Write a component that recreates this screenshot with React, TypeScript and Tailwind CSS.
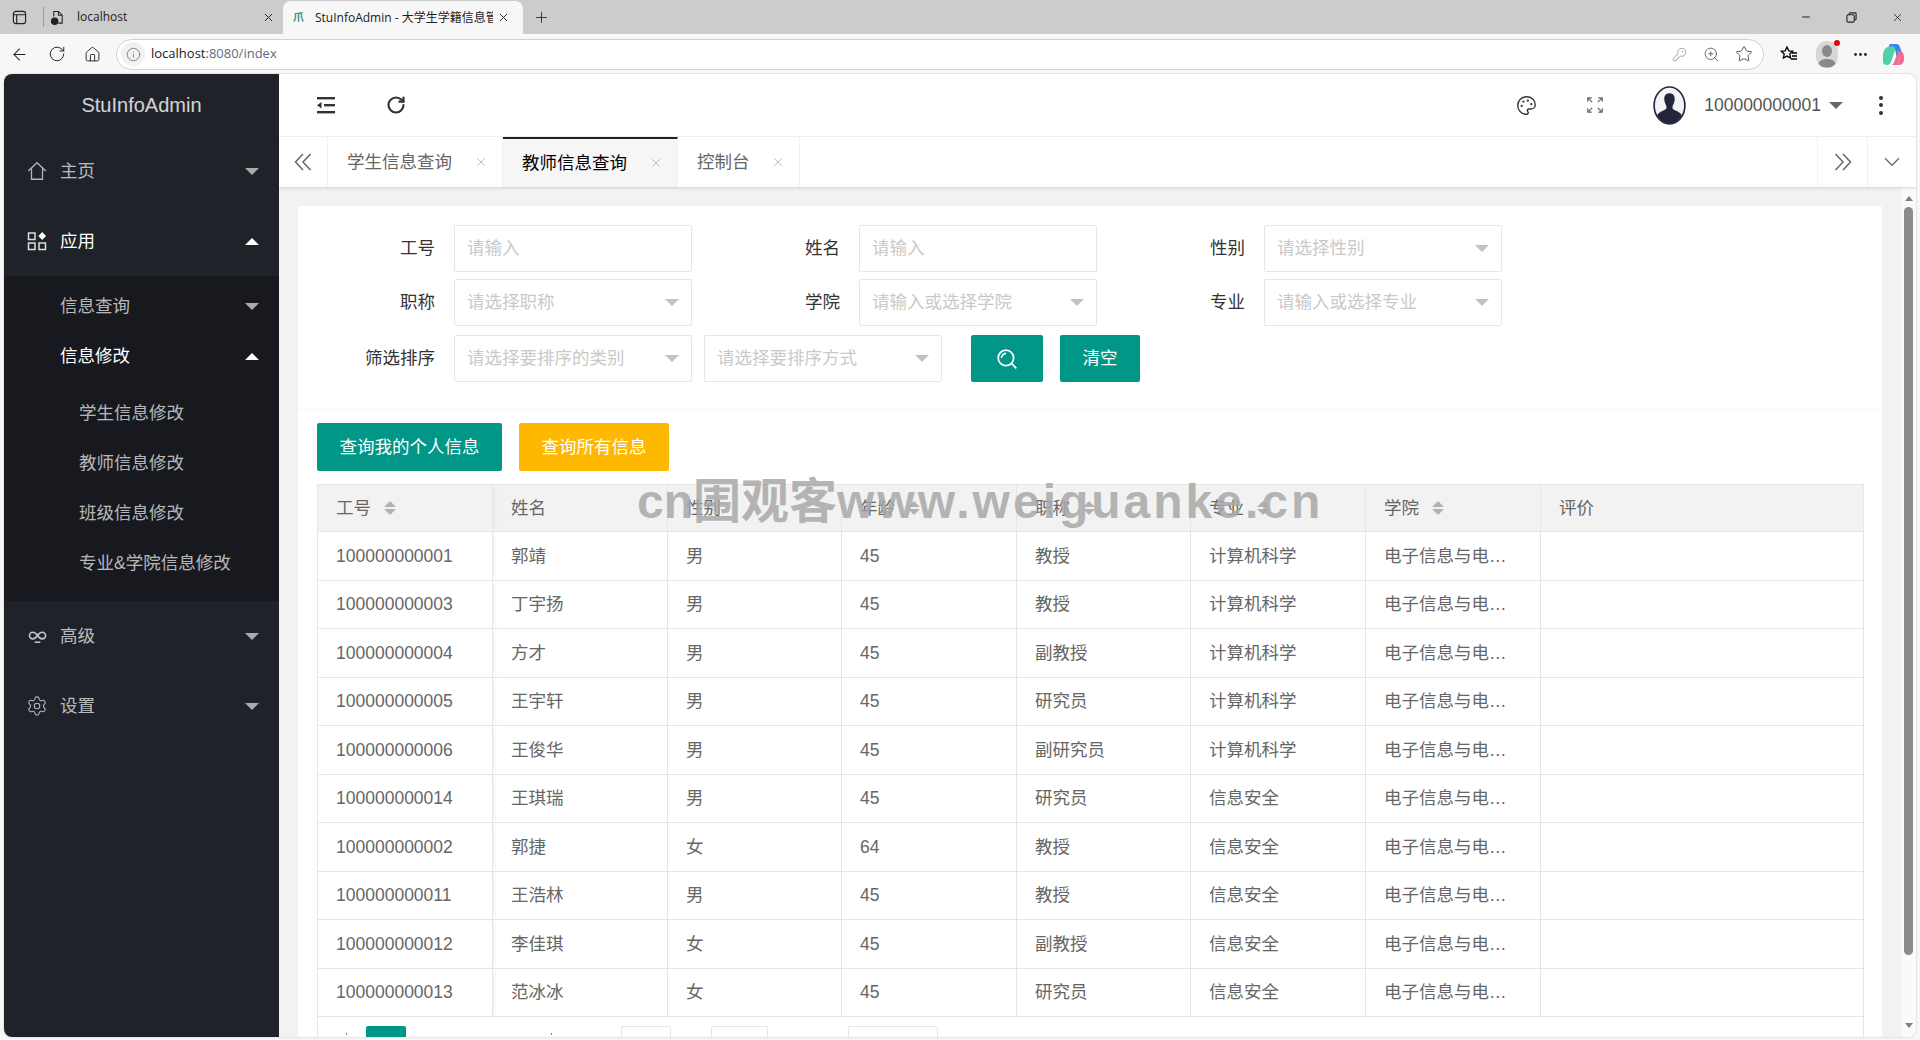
import React from 'react';
import { ChevronDown, Palette, RotateCw, Settings, X, Plus, ArrowLeft, Home, Info, KeyRound, ZoomIn, Star, MoreHorizontal, Minus } from 'lucide-react';

const rows = [
    ['100000000001', '郭靖', '男', '45', '教授', '计算机科学'],
    ['100000000003', '丁宇扬', '男', '45', '教授', '计算机科学'],
    ['100000000004', '方才', '男', '45', '副教授', '计算机科学'],
    ['100000000005', '王宇轩', '男', '45', '研究员', '计算机科学'],
    ['100000000006', '王俊华', '男', '45', '副研究员', '计算机科学'],
    ['100000000014', '王琪瑞', '男', '45', '研究员', '信息安全'],
    ['100000000002', '郭捷', '女', '64', '教授', '信息安全'],
    ['100000000011', '王浩林', '男', '45', '教授', '信息安全'],
    ['100000000012', '李佳琪', '女', '45', '副教授', '信息安全'],
    ['100000000013', '范冰冰', '女', '45', '研究员', '信息安全'],
];

function CaretDown({ color = 'border-t-[#aaaaaa]' }: { color?: string }) {
    return <span className={`block w-0 h-0 border-x-[7px] border-x-transparent border-t-[7px] ${color}`} />;
}

function CaretUp() {
    return <span className="block w-0 h-0 border-x-[7px] border-x-transparent border-b-[7px] border-b-white" />;
}

function SortIcon() {
    return (
        <span className="inline-flex flex-col gap-[2px] ml-[13px]">
            <span className="block w-0 h-0 border-x-[6px] border-x-transparent border-b-[6px] border-b-[#b2b2b2]" />
            <span className="block w-0 h-0 border-x-[6px] border-x-transparent border-t-[6px] border-t-[#b2b2b2]" />
        </span>
    );
}

function SideItem({ icon, label, open }: { icon: React.ReactNode; label: string; open?: boolean }) {
    return (
        <div className={`h-[70px] flex items-center pl-[21px] pr-[20px] text-[17.5px] ${open ? 'text-white' : 'text-white/70'}`}>
            <span className="w-[24px] h-[24px] flex items-center justify-center mr-[11px]">{icon}</span>
            <span className="flex-1">{label}</span>
            {open ? <CaretUp /> : <CaretDown />}
        </div>
    );
}

function SubItem({ label, open }: { label: string; open?: boolean }) {
    return (
        <div className={`h-[50px] flex items-center pl-[56px] pr-[20px] text-[17.5px] ${open ? 'text-white' : 'text-white/70'}`}>
            <span className="flex-1">{label}</span>
            {open ? <CaretUp /> : <CaretDown />}
        </div>
    );
}

function Sidebar() {
    return (
        <div className="w-[275px] shrink-0 bg-[#20222a] flex flex-col">
            <div className="h-[62px] flex items-center justify-center text-[20px] text-white/80 border-b border-[#1c1e25]">StuInfoAdmin</div>
            <SideItem
                label="主页"
                icon={<svg viewBox="0 0 20 20" className="w-[22px] h-[22px] fill-none stroke-[#b4b5b8] stroke-[1.2]"><path d="M2 10 10 2.500 18 10M5 8v9.500h10V8" /></svg>}
            />
            <SideItem
                open
                label="应用"
                icon={<svg viewBox="0 0 20 20" className="w-[20px] h-[20px] fill-none stroke-[#dddddd] stroke-[1.5]"><rect x="1.500" y="2" width="6.500" height="6.500" /><rect x="1.500" y="12" width="6.500" height="6.500" /><rect x="12" y="12" width="6.500" height="6.500" /><path d="M15.200 1 19 5l-3.800 4-3.800-4z" className="fill-white stroke-none" /></svg>}
            />
            <div className="bg-[#18191e] pt-[5px] pb-[13px]">
                <SubItem label="信息查询" />
                <SubItem label="信息修改" open />
                <div className="pt-[7px] text-[17.5px] text-white/70">
                    {['学生信息修改', '教师信息修改', '班级信息修改', '专业&学院信息修改'].map(label => (
                        <div key={label} className="h-[50px] flex items-center pl-[75px]">{label}</div>
                    ))}
                </div>
            </div>
            <SideItem
                label="高级"
                icon={<svg viewBox="0 0 20 20" className="w-[19px] h-[19px] fill-none stroke-[#c4c5c8] stroke-[1.7]"><path d="M10 9C8 6 6.500 5.500 5 5.500a3.500 3.500 0 0 0 0 7c1.500 0 3-.5 5-3.500s3.500-3.500 5-3.500a3.500 3.500 0 0 1 0 7c-1.500 0-3-.5-5-3.500zM7 16h6" /></svg>}
            />
            <SideItem label="设置" icon={<Settings className="w-[22px] h-[22px] text-[#b4b5b8]" strokeWidth={1.2} />} />
        </div>
    );
}

function Header() {
    return (
        <div className="h-[63px] shrink-0 flex items-center border-b border-[#f4f4f4]">
            <svg viewBox="0 0 20 20" className="ml-[37px] w-[20px] h-[20px] fill-[#333]">
                <rect x="1" y="2" width="18" height="2.400" />
                <rect x="8" y="9" width="11" height="2.400" />
                <rect x="1" y="16" width="18" height="2.400" />
                <path d="M1 10.200 5.500 7v6.400z" />
            </svg>
            <RotateCw className="ml-[50px] w-[20px] h-[20px] text-[#333]" strokeWidth={2.6} />
            <span className="flex-1" />
            <Palette className="w-[21px] h-[21px] text-[#333]" strokeWidth={1.6} />
            <svg viewBox="0 0 20 20" className="ml-[50px] w-[16px] h-[16px] fill-none stroke-[#666] stroke-[1.5]">
                <path d="M1 6V1h5M1 1l5.500 5.500M14 1h5v5M19 1l-5.500 5.500M1 14v5h5M1 19l5.500-5.500M14 19h5v-5M19 19l-5.500-5.500" />
            </svg>
            <svg viewBox="0 0 32 38" className="ml-[50px] w-[33px] h-[39px]">
                <ellipse cx="16" cy="19" rx="15" ry="18" fill="#f3f3f5" stroke="#23253a" strokeWidth="1.600" />
                <path d="M16 7c-4 0-5.500 3-5 7 .3 2 1 4 2 5.500v2.500c-1 2-7 2.500-9 6.500 2 4 7 8 12 8s10-4 12-8c-2-4-8-4.500-9-6.500v-2.500c1-1.500 1.700-3.500 2-5.500.5-4-1-7-5-7z" fill="#23253a" />
            </svg>
            <span className="ml-[18px] text-[17.5px] text-[#555]">100000000001</span>
            <span className="ml-[8px]"><CaretDown color="border-t-[#666]" /></span>
            <span className="ml-[36px] mr-[33px] flex flex-col gap-[3.500px]">
                <span className="w-[4px] h-[4px] rounded-full bg-[#333]" />
                <span className="w-[4px] h-[4px] rounded-full bg-[#333]" />
                <span className="w-[4px] h-[4px] rounded-full bg-[#333]" />
            </span>
        </div>
    );
}

function TabItem({ label, width, active }: { label: string; width: string; active?: boolean }) {
    return (
        <div className={`${width} h-full flex items-center pl-[19px] border-r border-[#f2f2f2] text-[17.5px] ${active ? 'bg-[#f6f6f6] border-t-[2px] border-t-[#20222a] text-black' : 'text-[#666]'}`}>
            <span className="flex-1">{label}</span>
            <X className="w-[14px] h-[14px] mr-[14px] text-[#b4b4b4]" strokeWidth={1.5} />
        </div>
    );
}

function DoubleChevron({ flip }: { flip?: boolean }) {
    return (
        <svg viewBox="0 0 20 20" className={`w-[20px] h-[20px] fill-none stroke-[#666] stroke-[1.5] ${flip ? 'rotate-180' : ''}`}>
            <path d="M10 2 2.500 10 10 18M17.500 2 10 10l7.500 8" />
        </svg>
    );
}

function TabsBar() {
    return (
        <div className="relative h-[50px] shrink-0 flex items-center shadow-[0_1px_3px_rgba(0,0,0,0.15)] bg-white">
            <div className="w-[49px] h-full flex items-center justify-center border-r border-[#f2f2f2]">
                <DoubleChevron />
            </div>
            <TabItem label="学生信息查询" width="w-[175px]" />
            <TabItem label="教师信息查询" width="w-[175px]" active />
            <TabItem label="控制台" width="w-[122px]" />
            <span className="flex-1" />
            <div className="w-[50px] h-full flex items-center justify-center border-l border-[#f2f2f2]">
                <DoubleChevron flip />
            </div>
            <div className="w-[49px] h-full flex items-center justify-center border-l border-[#f2f2f2]">
                <ChevronDown className="w-[26px] h-[26px] text-[#666]" strokeWidth={1.200} />
            </div>
        </div>
    );
}

function Field({ label, placeholder, select }: { label: string; placeholder: string; select?: boolean }) {
    return (
        <div className="flex items-center">
            <label className="w-[137px] text-right text-[17.5px] text-[#333]">{label}</label>
            <Control placeholder={placeholder} select={select} className="ml-[19px]" />
        </div>
    );
}

function Control({ placeholder, select, className = '' }: { placeholder: string; select?: boolean; className?: string }) {
    return (
        <div className={`w-[238px] h-[47px] px-[12px] flex items-center border border-[#e6e6e6] rounded-[2px] text-[17.5px] text-[#c9c9c9] ${className}`}>
            <span className="flex-1">{placeholder}</span>
            {select && <CaretDown color="border-t-[#c2c2c2]" />}
        </div>
    );
}

function SearchForm() {
    return (
        <div className="h-[204px] pt-[19px] border-b border-[#f6f6f6] flex flex-col">
            <div className="flex gap-x-[11px]">
                <Field label="工号" placeholder="请输入" />
                <Field label="姓名" placeholder="请输入" />
                <Field label="性别" placeholder="请选择性别" select />
            </div>
            <div className="flex gap-x-[11px] mt-[7px]">
                <Field label="职称" placeholder="请选择职称" select />
                <Field label="学院" placeholder="请输入或选择学院" select />
                <Field label="专业" placeholder="请输入或选择专业" select />
            </div>
            <div className="flex items-center mt-[9px]">
                <Field label="筛选排序" placeholder="请选择要排序的类别" select />
                <Control placeholder="请选择要排序方式" select className="ml-[12px]" />
                <button className="ml-[29px] w-[72px] h-[47px] rounded-[2px] bg-[#009688] flex items-center justify-center">
                    <svg viewBox="0 0 20 20" className="w-[22px] h-[22px] fill-none stroke-white stroke-[1.600]"><circle cx="9" cy="9" r="7" /><path d="M14 14l4.500 4.500M5 9a4 4 0 0 1 4-4" /></svg>
                </button>
                <button className="ml-[17px] w-[80px] h-[47px] rounded-[2px] bg-[#009688] text-white text-[17.5px]">清空</button>
            </div>
        </div>
    );
}

function TeacherTable() {
    const headers = ['工号', '姓名', '性别', '年龄', '职称', '专业', '学院', '评价'];
    const sortable = [true, false, false, true, true, true, true, false];
    return (
        <table className="w-[1547px] table-fixed border-collapse text-[17.5px] text-[#666]">
            <colgroup>
                <col className="w-[175px]" />
                <col className="w-[175px]" />
                <col className="w-[174px]" />
                <col className="w-[175px]" />
                <col className="w-[174px]" />
                <col className="w-[175px]" />
                <col className="w-[175px]" />
                <col />
            </colgroup>
            <thead>
                <tr className="h-[47px] bg-[#f2f2f2]">
                    {headers.map((h, i) => (
                        <th key={h} className={`border border-[#e6e6e6] px-[18px] text-left font-normal ${i === 0 ? 'shadow-[4px_0_5px_-3px_rgba(0,0,0,0.08)]' : ''}`}>
                            <span className="flex items-center">{h}{sortable[i] && <SortIcon />}</span>
                        </th>
                    ))}
                </tr>
            </thead>
            <tbody>
                {rows.map(r => (
                    <tr key={r[0]} className="h-[48.5px]">
                        {r.map((c, i) => (
                            <td key={i} className={`border border-[#e6e6e6] px-[18px] ${i === 0 ? 'shadow-[4px_0_5px_-3px_rgba(0,0,0,0.08)]' : ''}`}>{c}</td>
                        ))}
                        <td className="border border-[#e6e6e6] px-[18px] truncate">电子信息与电气工程学院</td>
                        <td className="border border-[#e6e6e6]" />
                    </tr>
                ))}
            </tbody>
        </table>
    );
}

function Pager() {
    return (
        <div className="w-[1547px] h-[50px] border-x border-[#e6e6e6] pt-[9px] flex items-start text-[17.5px] text-[#666]">
            <span className="ml-[28px] w-[1px] h-[2px] mt-[7px] bg-[#888]" />
            <span className="ml-[19px] w-[40px] h-[36px] rounded-[2px] bg-[#009688]" />
            <span className="ml-[145px] w-[1px] h-[2px] mt-[7px] bg-[#888]" />
            <span className="ml-[69px] w-[50px] h-[36px] border border-[#e6e6e6] rounded-[2px]" />
            <span className="ml-[40px] w-[57px] h-[36px] border border-[#e6e6e6] rounded-[2px]" />
            <span className="ml-[80px] w-[90px] h-[36px] border border-[#e6e6e6] rounded-[2px]" />
        </div>
    );
}

function ContentArea() {
    return (
        <div className="flex-1 min-h-0 flex overflow-hidden">
            <div className="flex-1 bg-[#f2f2f2] pt-[19px] pl-[19px] pr-[19px] overflow-hidden">
                <div className="bg-white rounded-[2px] h-[900px]">
                    <SearchForm />
                    <div className="px-[19px]">
                        <div className="flex gap-[17px] pt-[13px] pb-[13px]">
                            <button className="w-[185px] h-[48px] rounded-[2px] bg-[#009688] text-white text-[17.5px]">查询我的个人信息</button>
                            <button className="w-[150px] h-[48px] rounded-[2px] bg-[#ffb800] text-white text-[17.5px]">查询所有信息</button>
                        </div>
                        <TeacherTable />
                        <Pager />
                    </div>
                </div>
            </div>
            <div className="w-[15px] shrink-0 bg-[#fafafa] flex flex-col items-center pt-[9px] pb-[9px]">
                <span className="w-0 h-0 border-x-[4.500px] border-x-transparent border-b-[5px] border-b-[#808080]" />
                <span className="w-[9px] h-[748px] mt-[6px] rounded-full bg-[#8b8b8b]" />
                <span className="flex-1" />
                <span className="w-0 h-0 border-x-[4.500px] border-x-transparent border-t-[5px] border-t-[#808080]" />
            </div>
        </div>
    );
}

function BrowserTabs() {
    return (
        <div className="h-[34px] shrink-0 bg-[#cccccc] flex items-center text-[#222]">
            <svg viewBox="0 0 16 16" className="ml-[12px] w-[15px] h-[15px] fill-none stroke-[#222] stroke-[1.2]"><rect x="1.500" y="1.500" width="13" height="13" rx="2.500" /><path d="M1.500 5h13M5 5v9.500" /></svg>
            <span className="ml-[16px] w-[1px] h-[20px] bg-[#999]" />
            <svg viewBox="0 0 16 16" className="ml-[6px] w-[15px] h-[17px] fill-none stroke-[#222] stroke-[1.1]"><path d="M4 7V1.500h5l4 4V14H9M9 1.500v4h4" /><circle cx="5" cy="12" r="3.500" className="fill-[#222]" /></svg>
            <span className="ml-[12px] w-[185px] text-[12px] text-[#222] font-['Open_Sans','Noto_Sans_CJK_SC',sans-serif]">localhost</span>
            <X className="w-[13px] h-[13px]" strokeWidth={1.8} />
            <div className="ml-[8px] w-[240px] h-[33px] mt-[1px] bg-[#f7f7f7] rounded-t-[8px] flex items-center pl-[8px]">
                <span className="w-[15px] h-[15px] flex items-center justify-center text-[11px] leading-none font-bold text-[#3b8f86]">爪</span>
                <span className="ml-[9px] w-[178px] whitespace-nowrap overflow-hidden text-[12px] text-[#222] font-['Open_Sans','Noto_Sans_CJK_SC',sans-serif]">StuInfoAdmin - 大学生学籍信息管理系统</span>
                <X className="ml-[4px] w-[13px] h-[13px]" strokeWidth={1.8} />
            </div>
            <Plus className="ml-[10px] w-[17px] h-[17px]" strokeWidth={1.200} />
            <span className="flex-1" />
            <Minus className="w-[12px] h-[12px]" strokeWidth={2} />
            <svg viewBox="0 0 12 12" className="ml-[34px] w-[11px] h-[11px] fill-none stroke-[#222] stroke-[1.200]"><rect x="1" y="3" width="8" height="8" rx="1.500" /><path d="M3.500 3V2a1 1 0 0 1 1-1H10a1 1 0 0 1 1 1v5.500a1 1 0 0 1-1 1H9" /></svg>
            <X className="ml-[34px] mr-[16px] w-[13px] h-[13px]" strokeWidth={1.5} />
        </div>
    );
}

function BrowserToolbar() {
    return (
        <div className="h-[40px] shrink-0 bg-[#f7f7f7] flex items-center text-[#222]">
            <ArrowLeft className="ml-[10px] w-[19px] h-[19px]" strokeWidth={1.3} />
            <RotateCw className="ml-[19px] w-[18px] h-[18px]" strokeWidth={1.3} />
            <Home className="ml-[18px] w-[17px] h-[17px]" strokeWidth={1.3} />
            <div className="ml-[15px] w-[1648px] h-[31px] bg-white border border-[#d0d0d0] rounded-full flex items-center">
                <span className="ml-[4px] w-[24px] h-[24px] rounded-full bg-[#f1f1f1] flex items-center justify-center">
                    <Info className="w-[15px] h-[15px] text-[#666]" strokeWidth={1.2} />
                </span>
                <span className="ml-[6px] text-[13px] text-[#222] font-['Open_Sans',sans-serif]">localhost<span className="text-[#5f6b80]">:8080/index</span></span>
                <span className="flex-1" />
                <KeyRound className="w-[15px] h-[15px] text-[#888]" strokeWidth={1.2} />
                <ZoomIn className="ml-[16px] w-[17px] h-[17px] text-[#555]" strokeWidth={1.2} />
                <Star className="ml-[15px] mr-[10px] w-[18px] h-[18px] text-[#444]" strokeWidth={1.2} />
            </div>
            <svg viewBox="0 0 18 18" className="ml-[16px] w-[18px] h-[18px] fill-none stroke-black stroke-[1.300]"><path d="M7 2l1.800 3.800 4 .5-3 2.800.8 4-3.600-2-3.600 2 .8-4-3-2.800 4-.5zM12 8h5M12 11h5M11 14h6" /></svg>
            <span className="relative ml-[18px] w-[22px] h-[27px] rounded-full bg-[#d6d6d4] flex items-end justify-center overflow-visible">
                <svg viewBox="0 0 22 27" className="w-[22px] h-[27px] fill-[#8a8a8a]"><ellipse cx="11" cy="10" rx="5" ry="6" /><path d="M2.500 23c1-4 4.500-5 8.500-5s7.500 1 8.500 5c-2 2.500-5 3.500-8.500 3.500S4.500 25.500 2.500 23z" /></svg>
                <span className="absolute -top-[1px] -right-[2px] w-[6px] h-[6px] rounded-full bg-[#e8000d]" />
            </span>
            <MoreHorizontal className="ml-[14px] w-[17px] h-[17px]" strokeWidth={2} />
            <svg viewBox="0 0 24 24" className="ml-[13px] w-[23px] h-[23px]">
                <path d="M9 1h6c2 0 3 1 4 4l3 9c1 3-1 5-3 5h-3l-2-11C13 5 12 4 10 4H7c0-2 1-3 2-3z" fill="#2f8ae8" />
                <path d="M7 4h5c2 0 2 2 1 5l-3 9c-1 3-2 5-5 5-3 0-4-2-4-5V13C1 8 4 4 7 4z" fill="#4fd0a8" />
                <path d="M14 8h4c3 0 5 3 5 7v2c0 3-2 6-5 6H9c2 0 3-1 4-4l3-8c.5-1.500 0-3-2-3z" fill="#f0689c" />
                <path d="M4 23h9c2 0 3-1 4-4l2-6c-1 6-2 10-6 10z" fill="#f5b042" />
            </svg>
        </div>
    );
}

export default function App() {
    return (
        <div className="relative w-[1920px] h-[1040px] overflow-hidden bg-[#f7f7f7] flex flex-col font-['Liberation_Sans','Noto_Sans_CJK_SC',sans-serif]">
            <BrowserTabs />
            <BrowserToolbar />
            <div className="flex-1 min-h-0 mx-[4px] mb-[3px] flex bg-white rounded-[8px] overflow-hidden shadow-[0_0_2px_rgba(0,0,0,0.25)]">
                <Sidebar />
                <div className="flex-1 min-w-0 flex flex-col">
                    <Header />
                    <TabsBar />
                    <ContentArea />
                </div>
            </div>
            <div className="absolute left-[637px] top-[477px] whitespace-nowrap text-[48px] leading-[50px] font-bold text-[#a8a8a8]/85">
                cn围观客<span className="tracking-[3px]">www.weiguanke.cn</span>
            </div>
        </div>
    );
}
